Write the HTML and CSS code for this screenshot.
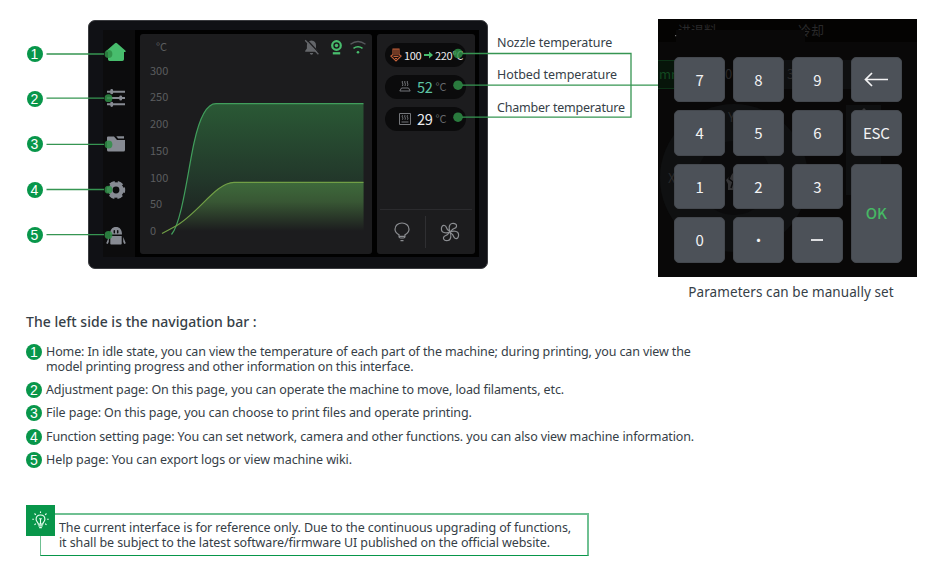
FILE: index.html
```html
<!DOCTYPE html>
<html lang="en">
<head>
<meta charset="utf-8">
<title>Printer interface guide</title>
<link rel="stylesheet" href="styles.css">
</head>
<body>
<main class="page">
  <section class="figure">
    <div class="markers">
      <span class="badge">1</span><span class="badge">2</span><span class="badge">3</span><span class="badge">4</span><span class="badge">5</span>
    </div>

    <div class="device">
      <div class="screen">
        <nav class="nav">
          <svg width="20" height="20" viewBox="0 0 20 20"><path fill="#48bd6d" d="M9 1.200q1-.8 2 0l8.300 7.200q.9.9 0 1.500H18v7.400q0 1.700-1.700 1.700H3.700Q2 19 2 17.300V9.900H.7q-.9-.6 0-1.500z"/></svg>
          <svg width="20" height="20" viewBox="0 0 20 20" stroke="#878b93" fill="none"><path stroke-width="2" d="M1 3.700h18M1 10h18M1 16.300h18"/><path stroke-width="2.800" stroke-linecap="round" d="M5.700 2.500v2.400M14.700 8.800v2.400M5.700 15.100v2.400"/></svg>
          <svg width="20" height="20" viewBox="0 0 20 20" fill="#878b93"><path d="M2 2.500h6l3 3.500h8v10q0 1.500-1.500 1.500h-15Q1 17.500 1 16V3.500q0-1 1-1z"/><path d="M10.300 2.300H18v2.200h-5.900z"/></svg>
          <svg width="20" height="20" viewBox="0 0 20 20"><g fill="none" stroke="#878b93"><circle cx="10" cy="10" r="5.600" stroke-width="4.400"/><circle cx="10" cy="10" r="8" stroke-width="2.400" stroke-dasharray="5.400 2.978" stroke-dashoffset="2.700"/></g></svg>
          <svg width="20" height="20" viewBox="0 0 20 20" fill="#878b93"><path d="M4 8.500C4 3.500 6.300 1 10 1s6 2.500 6 7.500zM4.300 10h11.400v7.700q0 .8-.8.800H5.100q-.8 0-.8-.800zM2.800 11v4.800l-1 2.200-1.600-.8zM17.200 11v4.800l1 2.200 1.600-.800z"/><path stroke="#0c0c0d" stroke-width="1.500" stroke-linecap="round" d="M8.300 4.800v1.900M11.700 4.800v1.900"/></svg>
        </nav>

        <div class="panel chart">
          <div class="axis">
            <span class="unit">°C</span><span>300</span><span>250</span><span>200</span><span>150</span><span>100</span><span>50</span><span>0</span>
          </div>
          <svg class="plot" viewBox="160 34 213 220" width="213" height="220">
            <defs>
              <linearGradient id="hot" x1="0" y1="103" x2="0" y2="232" gradientUnits="userSpaceOnUse"><stop offset="0" stop-color="#2a5935"/><stop offset=".6" stop-color="#22372a"/><stop offset="1" stop-color="#1c1c1e"/></linearGradient>
              <linearGradient id="bed" x1="0" y1="182" x2="0" y2="231" gradientUnits="userSpaceOnUse"><stop offset="0" stop-color="#3e6a3b"/><stop offset=".4" stop-color="#385734"/><stop offset="1" stop-color="#1c1c1e"/></linearGradient>
            </defs>
            <path fill="url(#hot)" d="M171.500 234.500C182 222 188 170 194 143 199 120 206 103.700 216 103.700H363.500V234.500z"/>
            <path fill="url(#bed)" d="M162 233.500L175 226.500C198 214 216 182.300 234 182.300H363.500V233.500z"/>
            <path fill="none" stroke="#419e5c" stroke-width="1.200" d="M171.500 234.500C182 222 188 170 194 143 199 120 206 103.700 216 103.700H363.500"/>
            <path fill="none" stroke="#719f46" stroke-width="1.200" d="M162 233.500L175 226.500C198 214 216 182.300 234 182.300H363.500"/>
          </svg>
          <svg class="status" viewBox="304 38 64 18" width="64" height="18">
            <path fill="#64666a" d="M311.500 40.500c3 .1 4.500 2.300 4.500 5v3l1.700 2.200v1h-12.500v-1l1.700-2.200v-3c0-2.700 1.600-4.900 4.600-5zM309.800 53h3.400q-.3 1.800-1.700 1.800T309.800 53z"/>
            <path stroke="#1c1c1e" stroke-width="1.300" d="M306.300 39.200l13.200 14"/><path stroke="#64666a" stroke-width="1.300" d="M305.200 40.200l13.200 14"/>
            <circle cx="336.500" cy="45.500" r="4.300" fill="none" stroke="#48bd6d" stroke-width="2.200"/><circle cx="336.500" cy="45.500" r="1.700" fill="#48bd6d"/><path stroke="#48bd6d" stroke-width="2.300" d="M332.800 53.300h7.400"/>
            <path fill="none" stroke="#55575b" stroke-width="1.400" d="M350.500 44.300q7.500-5.500 15 0"/><path fill="none" stroke="#48bd6d" stroke-width="1.500" d="M353.500 48.300q4.500-3.300 9 0"/><circle cx="358" cy="52.300" r="1.300" fill="#48bd6d"/>
          </svg>
        </div>

        <div class="panel side">
          <div class="pills">
            <div class="pill nozzle">
              <svg width="12" height="14" viewBox="0 0 12 14" fill="none" stroke="#c5613a" stroke-width="1.100"><path d="M3 7.500V1h6v6.500M5 1v6.500M7 1v6.500M3 6.500L.8 8 6 13l5.200-5L9 6.500M3.500 8.500h5M5 10.500h2"/></svg>
              <b>100</b><svg width="9" height="8" viewBox="0 0 9 8" fill="#48bd6d"><path d="M0 3h5V.5L9 4 5 7.500V5H0z"/></svg><b>220℃</b>
            </div>
            <div class="pill">
              <svg width="12" height="11" viewBox="0 0 12 11" fill="none" stroke="#74767a"><path d="M2.500 7h7l1.700 3H.8zM3.500 0q-.8 1 0 2t0 3M6 0q-.8 1 0 2t0 3M8.500 0q-.8 1 0 2t0 3"/></svg>
              <strong class="bed">52</strong><small>°C</small>
            </div>
            <div class="pill">
              <svg width="12" height="12" viewBox="0 0 12 12" fill="none" stroke="#74767a"><path d="M.5.500h11v11H.500zM3.500 2.200q-.8 1 0 2t0 2.500M6 2.200q-.8 1 0 2t0 2.500M8.500 2.200q-.8 1 0 2t0 2.500M2.500 9h7"/></svg>
              <strong>29</strong><small>°C</small>
            </div>
          </div>
          <div class="toggles">
            <span><svg width="16" height="20" viewBox="0 0 16 20" fill="none" stroke="#8b8d91" stroke-width="1.200"><path d="M5 14.500v-1.800C2.500 11.300 1 9.500 1 7.200 1 3.500 4 1 8 1s7 2.500 7 6.200c0 2.300-1.500 4.100-4 5.500v1.800q0 1.500-1.500 1.500h-3Q5 16 5 14.500zM5.200 14.300h5.600M6.500 18.700h3"/></svg></span>
            <span><svg width="20" height="20" viewBox="-10 -10 20 20" fill="none" stroke="#8b8d91" stroke-width="1.200"><g id="blade"><path d="M0 0C-1.500-3-1.200-8 2-8.500c3-.5 5 1 4.500 3-.5 2-2.700 1.800-4 3C1.600-1.600 1-.5 0 0"/></g><use href="#blade" transform="rotate(90)"/><use href="#blade" transform="rotate(180)"/><use href="#blade" transform="rotate(270)"/></svg></span>
          </div>
        </div>
      </div>
    </div>

    <div class="labels"><span class="l1">Nozzle temperature</span><span class="l2">Hotbed temperature</span><span class="l3">Chamber temperature</span></div>

    <div class="keypad-box">
      <div class="keypad">
        <svg class="ghost" width="259" height="258" viewBox="658 19 259 258">
          <path fill="#040302" d="M658 19h259v23H658z"/>
          <circle cx="734" cy="178" r="74" fill="#0f1011"/><circle cx="734" cy="178" r="37" fill="#0b0b0c"/>
          <path fill="#0f1011" d="M733 60h127v29H733zM846 105h35v90h-35z"/>
          <path fill="#07150a" stroke="#0c3116" d="M657 60.500h30v28h-30z"/>
          <g fill="#29292a" font-size="13"><text x="678" y="35">进退料</text><text x="798" y="35">冷却</text><text x="659" y="79" fill="#124820">mm</text><text x="725" y="79">0</text><text x="787" y="79">3</text><text x="728" y="122">Y</text><text x="668" y="183">X</text></g>
          <path fill="#090808" d="M676 30h129v18H676z"/><path fill="#6b6b6b" d="M675 35h1.200v1.200H675z"/>
          <path fill="#343436" d="M726 180l9-9v19h-7v-6zM860 112l4-4 4 4z"/><path fill="none" stroke="#0b0b0c" stroke-width="1.500" d="M731 174l-2 5 4 3-2 6"/>
        </svg>
        <span class="key">7</span><span class="key">8</span><span class="key">9</span>
        <span class="key"><svg width="24" height="15" viewBox="0 0 24 15" fill="none" stroke="#f3f3f4" stroke-width="1.700"><path d="M24 7.500H1.500M8 1L1.500 7.500 8 14"/></svg></span>
        <span class="key">4</span><span class="key">5</span><span class="key">6</span><span class="key esc">ESC</span>
        <span class="key">1</span><span class="key">2</span><span class="key">3</span><span class="key ok">OK</span>
        <span class="key">0</span><span class="key">·</span><span class="key"><i class="minus"></i></span>
      </div>
      <p class="caption">Parameters can be manually set</p>
    </div>

    <svg class="leaders" width="935" height="300" viewBox="0 0 935 300">
      <g fill="none" stroke="#369552" stroke-width="1.300"><path d="M46.500 54H104M46.500 98.200H104M46.500 144.400H104M46.500 189.500H104M46.500 234.700H104M462 53.500H631V117.200H462M462 85.200H658"/></g>
      <g fill="#2f8e46" fill-opacity=".85"><circle cx="108.500" cy="54" r="3.900"/><circle cx="108.500" cy="98.200" r="3.900"/><circle cx="108.500" cy="144.500" r="3.900"/><circle cx="108.500" cy="189.700" r="3.900"/><circle cx="108.500" cy="235" r="3.900"/><circle cx="458" cy="53.500" r="4.800"/><circle cx="458" cy="85.200" r="4.800"/><circle cx="458" cy="117.200" r="4.800"/></g>
    </svg>
  </section>

  <section class="guide">
    <h1>The left side is the navigation bar :</h1>
    <ol>
      <li class="two"><span class="badge">1</span><p><span class="t1">Home: In idle state, you can view the temperature of each part of the machine; during printing, you can view the</span><span class="t2">model printing progress and other information on this interface.</span></p></li>
      <li><span class="badge">2</span><p><span class="t3">Adjustment page: On this page, you can operate the machine to move, load filaments, etc.</span></p></li>
      <li><span class="badge">3</span><p><span class="t4">File page: On this page, you can choose to print files and operate printing.</span></p></li>
      <li><span class="badge">4</span><p><span class="t5">Function setting page: You can set network, camera and other functions. you can also view machine information.</span></p></li>
      <li><span class="badge">5</span><p><span class="t6">Help page: You can export logs or view machine wiki.</span></p></li>
    </ol>
  </section>

  <aside class="note">
    <span class="tip"><svg width="19" height="22" viewBox="0 0 19 22" fill="none" stroke="#e9fff1" stroke-width="1.300"><path d="M7 14.500c0-2-2.500-2.700-2.500-5.500 0-3 2.300-4.800 5-4.800s5 1.800 5 4.800c0 2.800-2.500 3.500-2.500 5.500zM7 16.500h5M8 18.500h3M9.500 14V9M8 8.500h3M9.500 0v2M0 9h2M17 9h2M2.700 2.500l1.500 1.500M16.300 2.500L14.800 4M2.700 15.500l1.500-1.500M16.300 15.500L14.800 14"/></svg></span>
    <p><span class="n1">The current interface is for reference only. Due to the continuous upgrading of functions,</span><span class="n2">it shall be subject to the latest software/firmware UI published on the official website.</span></p>
  </aside>
</main>
</body>
</html>
```

FILE: styles.css
```css
* { box-sizing: border-box; }
body { margin: 0; background: #fff; color: #364047; font: 12.5px/15px "Noto Sans", sans-serif; }
p, h1, ol { margin: 0; padding: 0; }
svg { display: block; flex: none; }
.page { width: 935px; height: 575px; overflow: hidden; }

.figure { position: relative; display: flex; align-items: flex-start; height: 312px; padding-top: 19px; }
.leaders { position: absolute; left: 0; top: 0; }
.markers { width: 61.500px; margin-left: 26.500px; padding-top: 27px; display: grid; grid-template-rows: repeat(5, 45.200px); }
.badge { width: 16px; height: 16px; flex: none; border-radius: 50%; background: #08964a; color: #fff; font: 14px/16px "Liberation Sans", sans-serif; text-align: center; }

.device { width: 400px; height: 249px; margin-top: .500px; padding: 10.500px 8px 11px 15px; background: #101115; border: 1px solid #3b3c40; border-radius: 7px; }
.screen { display: flex; height: 227px; margin: -1px 0 0 -1px; background: #010101; }
.nav { width: 32px; margin-right: 5px; padding: 12px 6px 0 0; background: #0c0c0d; display: grid; grid-template-rows: repeat(5, 46.100px); justify-content: center; }
.panel { height: 220px; margin-top: 4px; background: #1c1c1e; border-radius: 3px; font-family: "Noto Sans CJK SC", sans-serif; }
.chart { position: relative; width: 232px; display: flex; margin-right: 5px; }
.axis { width: 20px; margin-top: -.500px; padding-left: 10px; display: grid; grid-template-rows: 24px repeat(7, 26.800px); color: #5b5c5f; font-size: 11px; line-height: 24px; white-space: nowrap; }
.axis .unit { padding-left: 6px; }
.status { position: absolute; right: 4px; top: 4px; }
.side { width: 98px; padding: 9px 3px 0; display: flex; flex-direction: column; justify-content: space-between; }
.pills { display: grid; gap: 8px; padding-left: 5px; }
.pill { width: 81px; height: 24px; border-radius: 12px; background: #0b0b0c; color: #ececee; display: flex; align-items: center; gap: 6px; padding: 0 0 1px 14px; white-space: nowrap; }
.pill b { font-weight: 400; font-size: 11px; letter-spacing: -.300px; }
.pill strong { font-weight: 400; font-size: 14.500px; letter-spacing: -.300px; }
.pill small { font-size: 11px; color: #66686b; margin-left: -3px; }
.pill .bed { color: #5ec4a4; }
.pill.nozzle { padding: 0 0 0 5px; gap: 2px; }
.nozzle b { width: 18px; }
.toggles { border-top: 1px solid #2b2b2e; height: 45px; display: flex; align-items: center; }
.toggles span { width: 45px; padding-right: 1.500px; display: flex; justify-content: center; height: 32px; align-items: center; }
.toggles span + span { width: 47px; padding: 0 0 0 1px; border-left: 1px solid #2f2f32; }

.labels { width: 170px; padding: 16px 0 0 9px; display: grid; grid-template-rows: repeat(3, 32.300px); white-space: nowrap; }
.l1, .l2 { letter-spacing: -.060px; }
.l3 { letter-spacing: -.200px; }

.keypad-box { width: 259px; }
.keypad { position: relative; height: 258px; background: #090808; padding: 38px 16px 14px 16.400px; display: grid; grid-template-columns: repeat(4, 50.500px); grid-template-rows: repeat(4, 45.400px); column-gap: 8.400px; row-gap: 8.100px; font-family: "Noto Sans CJK SC", sans-serif; overflow: hidden; }
.ghost { position: absolute; left: 0; top: 0; }
.key { position: relative; display: flex; align-items: center; justify-content: center; padding-bottom: 1px; border-radius: 5px; background: #4c5158; border: 1px solid #44484e; color: #f3f3f4; font-size: 15px; }
.esc { letter-spacing: -.200px; }
.ok { grid-column: 4; grid-row: 3 / 5; color: #46b864; font-weight: 500; }
.minus { width: 12px; height: 2px; background: #dcdddf; }
.caption { margin-top: 8px; padding-left: 7px; text-align: center; font-size: 13.500px; letter-spacing: .080px; }

.guide { padding-left: 26px; height: 192px; white-space: nowrap; }
.guide h1 { font-size: 14px; line-height: 20px; font-weight: 500; letter-spacing: .020px; margin-bottom: 12px; }
.guide ol { list-style: none; }
.guide li { display: flex; gap: 4px; height: 23.300px; }
.guide li.two { height: 38px; }
.guide p span, .note p span { display: block; }
.t1, .t3 { letter-spacing: -.117px; }
.t2 { letter-spacing: -.170px; }
.t4 { letter-spacing: -.105px; }
.t5 { letter-spacing: -.112px; }
.t6 { letter-spacing: -.080px; }

.note { position: relative; width: 549px; height: 43px; margin: 9px 0 0 40px; border: solid #6fc092; border-width: 2px 2px 1px 1px; border-bottom-color: #08964a; padding: 5px 0 0 18px; white-space: nowrap; }
.n1, .n2 { letter-spacing: -.105px; }
.tip { position: absolute; left: -15px; top: -10px; width: 29px; height: 31px; background: #08964a; display: flex; align-items: center; justify-content: center; }
.tip svg { transform: scale(.88); }
```
